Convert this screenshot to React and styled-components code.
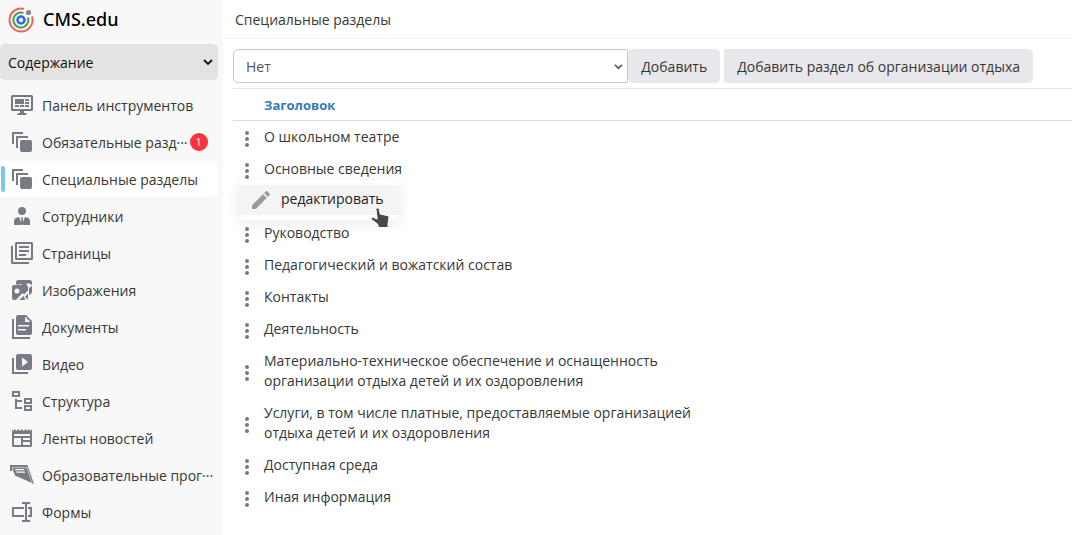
import React from "react";
import styled, { createGlobalStyle, css } from "styled-components";

const GlobalStyle = createGlobalStyle`
    *, *::before, *::after {
        box-sizing: border-box;
    }
    body {
        margin: 0;
        background: #fff;
        color: #373737;
        font: 14px/20px "Open Sans", "Noto Sans", sans-serif;
    }
    button, select {
        font: inherit;
        color: inherit;
    }
`

const Layout = styled.div`
    display: flex;
    align-items: stretch;
    min-height: 100vh;
`

const Sidebar = styled.aside`
    flex: 0 0 223px;
    background: #f8f8f8;
`

const Brand = styled.a`
    display: flex;
    align-items: center;
    gap: 9px;
    height: 40px;
    padding-left: 8px;
    color: #000;
    font-family: "Noto Sans", sans-serif;
    font-size: 18px;
    font-weight: 500;
    text-decoration: none;
    span {
        padding-bottom: 2px;
    }
`

const SelectBox = styled.div`
    display: grid;
    align-items: center;
    flex: 1;
    min-width: 0;
    > * {
        grid-area: 1 / 1;
    }
    svg {
        justify-self: end;
        margin-right: 5px;
        pointer-events: none;
    }
`

const Switcher = styled.div`
    padding: 4px 5px 7px 0;
`

const SectionSelect = styled.select`
    appearance: none;
    height: 36px;
    padding: 2px 24px 0 8px;
    border: 0;
    border-radius: 5px;
    background: #e3e3e3;
    color: #111;
`

const Menu = styled.nav`
    display: flex;
    flex-direction: column;
    gap: 1px;
    padding-right: 5px;
`

const MenuLink = styled.a`
    display: flex;
    align-items: center;
    height: 36px;
    padding-left: 10px;
    border-radius: 0 5px 5px 0;
    color: inherit;
    text-decoration: none;
    white-space: nowrap;
    svg {
        flex: none;
        margin-right: 8px;
    }
    ${props => props.$active && css`
        background: #fff;
        padding-left: 1px;
        &::before {
            content: "";
            width: 4px;
            height: 26px;
            margin-right: 5px;
            border-radius: 2px;
            background: #7cc4f5;
        }
    `}
`

const Label = styled.span`
    padding-top: 2px;
`

const Badge = styled.span`
    display: flex;
    align-items: center;
    justify-content: center;
    width: 18px;
    height: 18px;
    margin-left: 2px;
    border-radius: 50%;
    background: #ff3238;
    color: #fff;
    font-size: 11px;
`

const Main = styled.main`
    flex: 1;
    min-width: 0;
`

const Header = styled.header`
    display: flex;
    align-items: center;
    height: 39px;
    padding: 2px 0 0 12px;
    border-bottom: 1px solid #f5f5f5;
`

const Title = styled.h1`
    margin: 0;
    font-size: 14px;
    font-weight: 400;
`

const Toolbar = styled.form`
    display: flex;
    padding: 10px 39px 5px 10px;
`

const TypeSelect = styled.select`
    appearance: none;
    height: 34px;
    padding: 2px 24px 0 12px;
    border: 1px solid #c8c8c8;
    border-radius: 5px 0 0 5px;
    background: #fff;
    color: #555;
`

const Button = styled.button`
    flex: none;
    height: 34px;
    padding: 2px 13px 0;
    border: 0;
    border-radius: ${props => props.$joined ? "0 5px 5px 0" : "5px"};
    margin-left: ${props => props.$joined ? "4px" : "0"};
    background: #e8e7ec;
`

const Table = styled.table`
    width: calc(100% - 10px);
    margin-left: 10px;
    border-collapse: separate;
    border-spacing: 0;
    table-layout: fixed;
`

const HeadCell = styled.th`
    width: ${props => props.$width || "auto"};
    height: 33px;
    padding: 0;
    border-top: 1px solid #e4e4e4;
    border-bottom: 1px solid #dcdcdc;
    color: #337ab7;
    font-size: 13px;
    font-weight: 700;
    text-align: left;
`

const Cell = styled.td`
    height: 32px;
    padding: 6px 0;
`

const ActionCell = styled.td`
    position: relative;
    padding: 4px 0 0 10px;
    vertical-align: middle;
`

const DotsButton = styled.button`
    display: block;
    padding: 0;
    border: 0;
    background: none;
`

const Popup = styled.div`
    position: absolute;
    z-index: 1;
    top: 27px;
    left: 6px;
    width: 160px;
    padding: 5px 0;
    border-radius: 5px;
    background: #fff;
    box-shadow: 0 3px 14px rgba(0, 0, 0, 0.09);
`

const PopupItem = styled.button`
    display: flex;
    align-items: center;
    gap: 8px;
    width: 100%;
    height: 30px;
    padding: 0 0 0 10px;
    border: 0;
    background: #f4f4f4;
    color: #222;
    span {
        padding-bottom: 2px;
    }
`

const Pointer = styled.svg`
    position: absolute;
    top: 27px;
    left: 131px;
`

const Icon = ({children}) => (
    <svg width="24" height="24" viewBox="0 0 24 24" fill="#777c84" aria-hidden="true">{children}</svg>
)

const Chevron = ({color, size}) => (
    <svg width={size} height={size} viewBox="0 0 10 10" fill="none" stroke={color} strokeWidth="1.800" aria-hidden="true">
        <path d="M1 3l4 4 4-4"/>
    </svg>
)

const icons = {
    dashboard: (
        <>
            <path fillRule="evenodd" d="M2.5 2h19A1.5 1.5 0 0 1 23 3.500v13a1.500 1.500 0 0 1-1.500 1.500H14v2h2.500v2h-9v-2H10v-2H2.500A1.500 1.500 0 0 1 1 16.500v-13A1.500 1.500 0 0 1 2.500 2zM3 4v12h18V4z"/>
            <path d="M5 6h9v5H5zM15 6h4v2h-4zM15 9h4v2h-4zM5 12h4v2H5zM10 12h4v2h-4zM15 12h4v2h-4z"/>
        </>
    ),
    copies: (
        <>
            <path d="M2 2h11v2H4v10H2zM6 6h12v2H8v10H6z"/>
            <rect x="10" y="10" width="12" height="12" rx="2"/>
        </>
    ),
    person: (
        <>
            <circle cx="12" cy="7" r="4"/>
            <path d="M4 21v-4c0-2.500 2-3.500 5-4l2 5 .5-3-1-1.500h3l-1 1.500.5 3 2-5c3 .5 5 1.500 5 4v4h-6.500L12 16l-1.500 5z"/>
            <path d="M11 14h2l-.5 1.500L13.500 20 12 21.500 10.500 20l1-4.500z"/>
        </>
    ),
    pages: (
        <>
            <path d="M1 5h2v16h16v2H2.500A1.500 1.500 0 0 1 1 21.500z"/>
            <path fillRule="evenodd" d="M6.500 1h15A1.500 1.500 0 0 1 23 2.500v15a1.500 1.500 0 0 1-1.500 1.500h-15A1.500 1.500 0 0 1 5 17.500v-15A1.500 1.500 0 0 1 6.500 1zM7 3v14h14V3z"/>
            <path d="M9 5h10v2H9zM9 9h10v2H9zM9 13h7v2H9z"/>
        </>
    ),
    images: (
        <>
            <path d="M6 6V4c0-1 1-2 2-2h12c1 0 2 1 2 2v3l-4-2-3 3-5-2-2 1z"/>
            <path d="M19 10l3-2v6c0 1-1 2-3 3z"/>
            <rect x="2" y="7" width="16" height="15" rx="2"/>
            <circle cx="7" cy="13" r="2.500" fill="#f8f8f8"/>
            <path d="M6 22l6.500-7 1.500 1.500 4-4v3l-3 3 2.500 3.500h-2L13.500 18 9 22z" fill="#f8f8f8"/>
        </>
    ),
    documents: (
        <>
            <path d="M2 4h2v18h16v2H2z"/>
            <path fillRule="evenodd" d="M8 0h8l6 6v12a2 2 0 0 1-2 2H8a2 2 0 0 1-2-2V2a2 2 0 0 1 2-2zM15 1.500V7h5.500zM8 10v1.500h11V10zM8 14v1.500h8V14z"/>
        </>
    ),
    video: (
        <>
            <path d="M2 6h2v14h14v2H2z"/>
            <path fillRule="evenodd" d="M8 2h12a2 2 0 0 1 2 2v12a2 2 0 0 1-2 2H8a2 2 0 0 1-2-2V4a2 2 0 0 1 2-2zM12 5.500v9l6-4.500z"/>
        </>
    ),
    structure: (
        <path fillRule="evenodd" d="M2 2h8v6H2zM4 4v2h4V4zM14 9h8v6h-8zM16 11v2h4v-2zM14 16h8v6h-8zM16 18v2h4v-2zM5 10h2v1h5v2H7v5h5v2H5z"/>
    ),
    news: (
        <path fillRule="evenodd" d="M2 3l1.500 2L5 3l1.700 2L8.500 3l1.700 2L12 3l1.700 2 1.800-2 1.700 2L19 3l1.500 2L22 3v16.500a1.500 1.500 0 0 1-1.500 1.500h-17A1.500 1.500 0 0 1 2 19.500zM4 8v2h16V8zM4 12v7h7v-7zM13 12v2h7v-2zM13 16v3h7v-3z"/>
    ),
    programs: (
        <>
            <path d="M0 2h17.500l1 3 5.500 16-1.500-.5L17 4H2v4H0z"/>
            <path fillRule="evenodd" d="M2 4.500h14.500L22 20 5 12.500zM5 6l.5 1.200h9L14 6zM6 8.500l.5 1.200h8.800l-.5-1.200z"/>
        </>
    ),
    forms: (
        <path d="M12 2h8v2h-3v16h3v2h-8v-2h3V4h-3zM2 7h12v2H4v6h10v2H2zM18 7h4v10h-4v-2h2V9h-2z"/>
    )
}

const menu = [
    {icon: "dashboard", label: "Панель инструментов"},
    {icon: "copies", label: "Обязательные разд···", count: 1},
    {icon: "copies", label: "Специальные разделы", active: true},
    {icon: "person", label: "Сотрудники"},
    {icon: "pages", label: "Страницы"},
    {icon: "images", label: "Изображения"},
    {icon: "documents", label: "Документы"},
    {icon: "video", label: "Видео"},
    {icon: "structure", label: "Структура"},
    {icon: "news", label: "Ленты новостей"},
    {icon: "programs", label: "Образовательные прог···"},
    {icon: "forms", label: "Формы"}
]

const sections = [
    "О школьном театре",
    "Основные сведения",
    "",
    "Руководство",
    "Педагогический и вожатский состав",
    "Контакты",
    "Деятельность",
    "Материально-техническое обеспечение и оснащенность организации отдыха детей и их оздоровления",
    "Услуги, в том числе платные, предоставляемые организацией отдыха детей и их оздоровления",
    "Доступная среда",
    "Иная информация"
]

const openedRow = 1

const Logo = () => (
    <svg width="26" height="26" viewBox="0 0 26 26" fill="none" strokeWidth="2" aria-hidden="true">
        <path d="M16 1.900A11.500 11.500 0 1 0 24 9.500" stroke="#f95f53"/>
        <path d="M15.500 5.900A7.500 7.500 0 1 0 20 10.500" stroke="#43a547"/>
        <circle cx="13" cy="13" r="3.500" stroke="#2962ff" strokeWidth="2.500"/>
        <circle cx="20.500" cy="5.500" r="2.600" fill="#868686"/>
    </svg>
)

const EditPopup = () => (
    <Popup>
        <PopupItem type="button">
            <svg width="24" height="24" viewBox="0 0 24 24" fill="#9b9b9b" aria-hidden="true">
                <path d="M3 17.250V21h3.750L17.810 9.940l-3.750-3.750zM20.710 7.040a1 1 0 0 0 0-1.410l-2.340-2.340a1 1 0 0 0-1.410 0l-1.830 1.830 3.750 3.750z"/>
            </svg>
            <span>редактировать</span>
        </PopupItem>
        <Pointer width="20" height="23" viewBox="0 0 20 23" aria-hidden="true">
            <path d="M6 2.500C6 .5 9 .5 9.300 2.500L10.200 7l7 1.500c1.500.4 1.800 1.300 1.700 2.700L18 17v3.500H8.500L7.500 17 1.500 12.500c-1-1.300.5-2.800 2-2l3.700 1.500z" fill="#484848" stroke="#fff"/>
        </Pointer>
    </Popup>
)

const App = () => (
    <>
        <GlobalStyle/>
        <Layout>
            <Sidebar>
                <Brand href="#">
                    <Logo/>
                    <span>CMS.edu</span>
                </Brand>
                <Switcher>
                    <SelectBox>
                        <SectionSelect aria-label="Раздел меню">
                            <option>Содержание</option>
                        </SectionSelect>
                        <Chevron color="#111" size="10"/>
                    </SelectBox>
                </Switcher>
                <Menu>
                    {menu.map(item => (
                        <MenuLink key={item.label} href="#" $active={item.active}>
                            <Icon>{icons[item.icon]}</Icon>
                            <Label>{item.label}</Label>
                            {item.count && <Badge>{item.count}</Badge>}
                        </MenuLink>
                    ))}
                </Menu>
            </Sidebar>
            <Main>
                <Header>
                    <Title>Специальные разделы</Title>
                </Header>
                <Toolbar>
                    <SelectBox>
                        <TypeSelect aria-label="Тип раздела">
                            <option>Нет</option>
                        </TypeSelect>
                        <Chevron color="#555" size="9"/>
                    </SelectBox>
                    <Button type="button">Добавить</Button>
                    <Button type="button" $joined>Добавить раздел об организации отдыха</Button>
                </Toolbar>
                <Table>
                    <thead>
                        <tr>
                            <HeadCell $width="31px"/>
                            <HeadCell $width="440px">Заголовок</HeadCell>
                            <HeadCell/>
                        </tr>
                    </thead>
                    <tbody>
                        {sections.map((title, index) => (
                            <tr key={index}>
                                <ActionCell>
                                    <DotsButton type="button" aria-label="Действия">
                                        <svg width="8" height="16" viewBox="0 0 8 16" fill="#777c84" display="block">
                                            <circle cx="4" cy="2" r="2"/>
                                            <circle cx="4" cy="8" r="2"/>
                                            <circle cx="4" cy="14" r="2"/>
                                        </svg>
                                    </DotsButton>
                                    {index === openedRow && <EditPopup/>}
                                </ActionCell>
                                <Cell>{title}</Cell>
                                <td/>
                            </tr>
                        ))}
                    </tbody>
                </Table>
            </Main>
        </Layout>
    </>
)

export default App;
